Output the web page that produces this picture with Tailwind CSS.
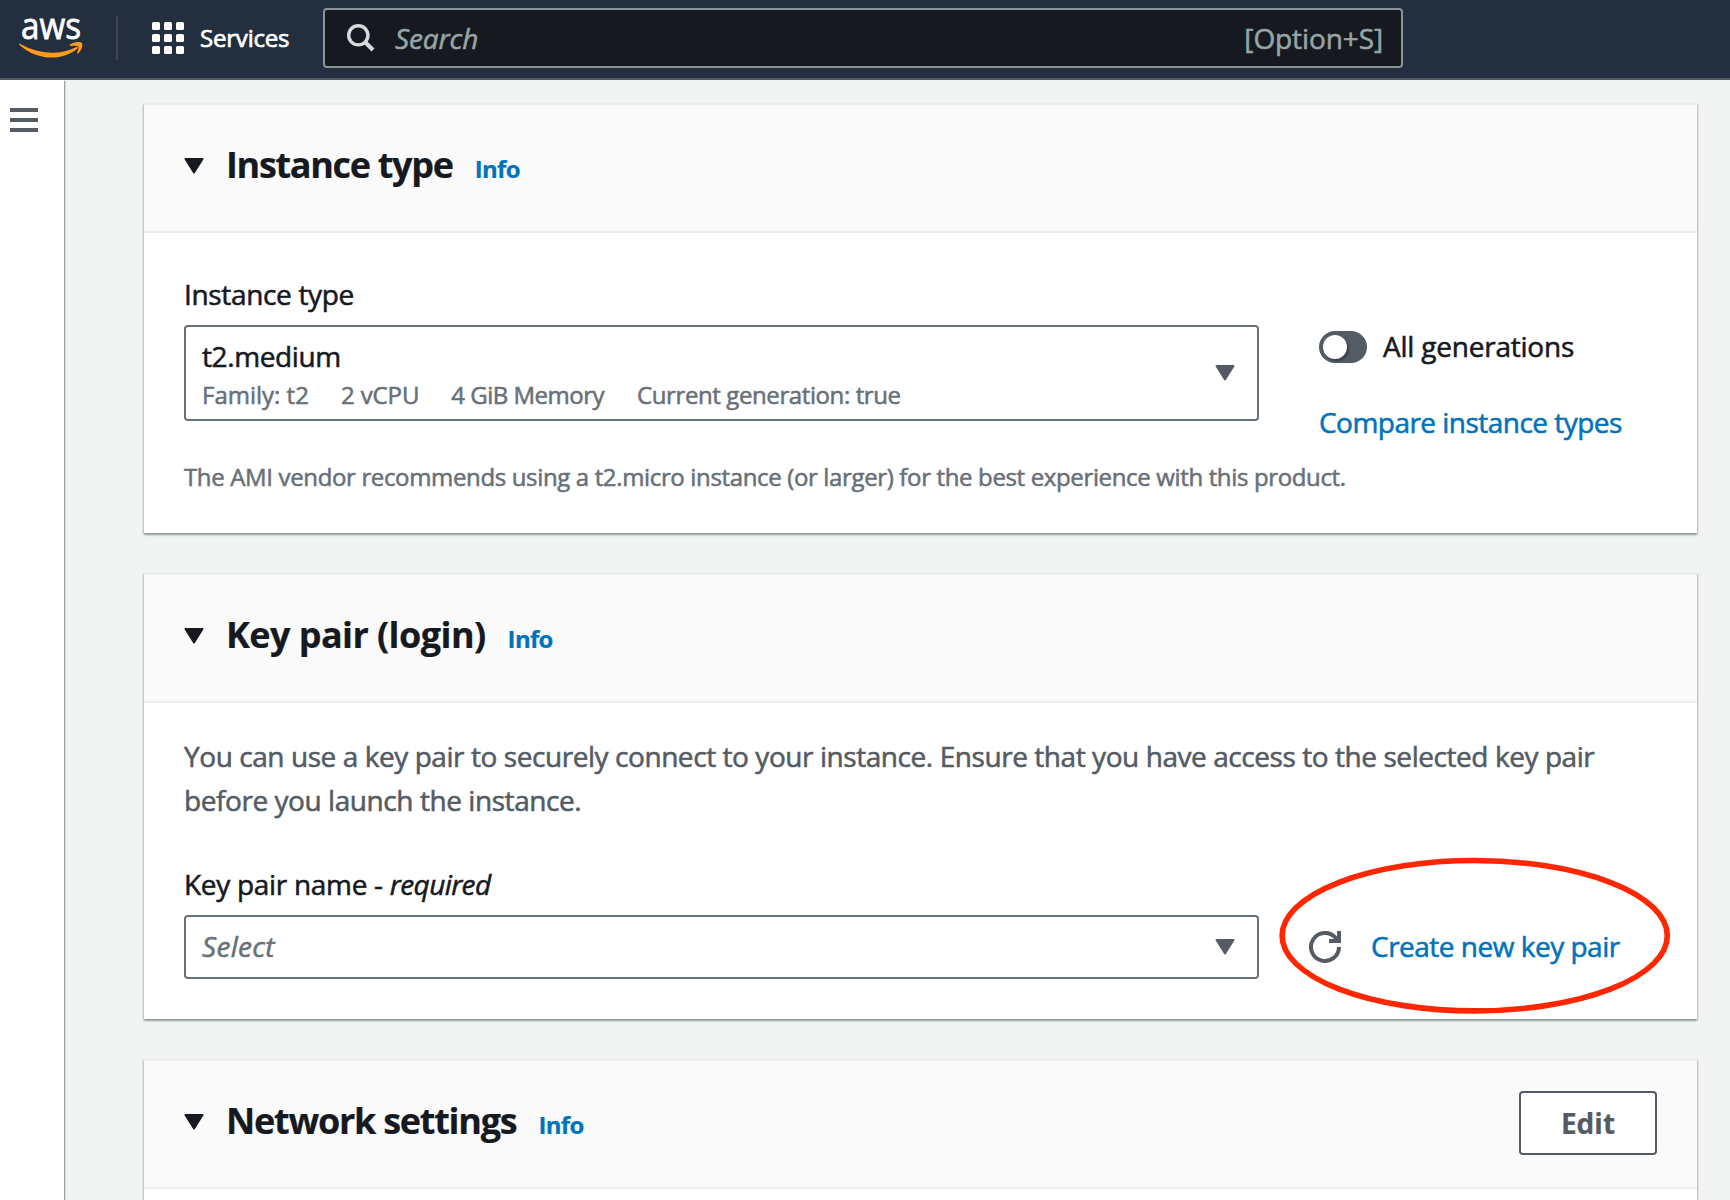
<!DOCTYPE html>
<html lang="en">
<head>
<meta charset="utf-8">
<title>Launch an instance | EC2</title>
<script src="https://cdn.jsdelivr.net/npm/@tailwindcss/browser@4"></script>
</head>
<body class="h-screen overflow-hidden bg-[#f2f3f3] font-['Open_Sans','Noto_Sans',sans-serif] text-[28px] leading-[44px] text-[#16191f] [-webkit-text-stroke:0.55px] whitespace-nowrap">
<svg class="hidden">
  <symbol id="caret" viewBox="0 0 20 16"><path d="M1.5 1h17L10 14.500z" fill="currentColor" stroke="currentColor" stroke-width="2" stroke-linejoin="round"/></symbol>
</svg>

<header class="flex h-20 items-center border-b-2 border-[#545b64] bg-[#232f3e] pb-[2px] pl-[19px] text-white">
  <svg class="h-[76px] w-[65px]" viewBox="0 -16 65 76" fill="none">
    <text x="2" y="23" font-size="37" fill="#fff" stroke="#fff" stroke-width=".8" textLength="60" lengthAdjust="spacingAndGlyphs">aws</text>
    <path d="M.6 27.600C18 37.800 40 40.300 57.500 31c1.200-.5 1.800.5.900 1.400C43 45.800 17.500 44.300.6 28.900c-.7-.8-.5-1.600 0-1.300z" fill="#ff9a1a"/>
    <path d="M51 28.600c3.500-2.800 10-3.300 11.800-1.500 1.500 1.800-.2 7.400-3.400 10.200-.9.700-1.700.2-1.300-.6 1-2.400 2-5 1.200-6.200-.9-1.100-4.700-.8-7.500-.6-1 .1-1.600-.7-.8-1.300z" fill="#ff9a1a"/>
  </svg>
  <div class="ml-[32px] h-11 w-[2px] bg-[#414750]"></div>
  <div class="ml-[34px] grid grid-cols-3 gap-1">
    <i class="size-2 rounded-[1.500px] bg-white"></i><i class="size-2 rounded-[1.500px] bg-white"></i><i class="size-2 rounded-[1.500px] bg-white"></i>
    <i class="size-2 rounded-[1.500px] bg-white"></i><i class="size-2 rounded-[1.500px] bg-white"></i><i class="size-2 rounded-[1.500px] bg-white"></i>
    <i class="size-2 rounded-[1.500px] bg-white"></i><i class="size-2 rounded-[1.500px] bg-white"></i><i class="size-2 rounded-[1.500px] bg-white"></i>
  </div>
  <span class="ml-4 w-[123px] text-2xl tracking-[-0.2px] [-webkit-text-stroke:0.7px]">Services</span>
  <div class="flex h-[60px] w-[1080px] items-center rounded-[4px] border-2 border-[#879596] bg-[#16191f] pr-[18px] pl-[22px] text-[#95a5a6]">
    <svg class="size-7 text-[#d5dbdb]" viewBox="0 0 28 28" fill="none" stroke="currentColor"><circle cx="11.300" cy="11.300" r="9.600" stroke-width="3.400"/><path d="M18 18l8 8" stroke-width="4"/></svg>
    <span class="ml-5 grow italic tracking-[-0.1px]">Search</span>
    <span class="tracking-[-0.1px]">[Option+S]</span>
  </div>
</header>

<div class="flex h-[1120px] overflow-hidden">
  <aside class="w-16 shrink-0 bg-white pt-7 pl-[10px] shadow-[1px_1px_1px_rgba(0,28,36,0.3),1px_0_2px_rgba(0,28,36,0.15)]">
    <div class="flex w-7 flex-col gap-[6px]"><i class="h-1 bg-[#545b64]"></i><i class="h-1 bg-[#545b64]"></i><i class="h-1 bg-[#545b64]"></i></div>
  </aside>

  <main class="ml-20 flex w-[1553px] flex-col gap-10 pt-[23px]">
    <section class="h-[430px] shrink-0 border-t-2 border-[#eaeded] bg-white shadow-[0_2px_2px_rgba(0,28,36,0.3),1px_1px_2px_rgba(0,28,36,0.15),-1px_1px_2px_rgba(0,28,36,0.15)]">
      <div class="flex h-32 items-center border-b-2 border-[#eaeded] bg-[#fafafa] px-10 pb-[2px]">
        <svg class="mb-[3px] h-4 w-5"><use href="#caret"/></svg>
        <div class="ml-[22px] flex items-baseline gap-[22px] pb-1">
          <h2 class="text-4xl leading-[44px] font-bold tracking-[-1.320px] [-webkit-text-stroke:0.2px]">Instance type</h2>
          <a class="text-2xl font-bold tracking-[-0.67px] text-[#0073bb] [-webkit-text-stroke:0.2px]">Info</a>
        </div>
      </div>
      <div class="flex gap-[60px] px-10">
        <div class="w-[1075px] shrink-0 pt-[39px]">
          <div class="tracking-[-0.34px]">Instance type</div>
          <div class="mt-[9px] flex h-24 items-center justify-between rounded-[4px] border-2 border-[#687078] pr-[22px] pl-4">
            <div class="pt-[3px]">
              <div class="leading-10 tracking-[-0.4px]">t2.medium</div>
              <div class="flex gap-8 pt-px text-2xl leading-9 text-[#687078]">
                <span class="tracking-[0]">Family: t2</span><span class="tracking-[-0.1px]">2 vCPU</span><span class="mr-px tracking-[-0.5px]">4 GiB Memory</span><span class="tracking-[-0.4px]">Current generation: true</span>
              </div>
            </div>
            <svg class="h-4 w-5 text-[#545b64]"><use href="#caret"/></svg>
          </div>
          <p class="mt-9 text-2xl leading-10 tracking-[-0.353px] text-[#687078]">The AMI vendor recommends using a t2.micro instance (or larger) for the best experience with this product.</p>
        </div>
        <div class="pt-[93px]">
          <div class="flex items-center gap-4">
            <div class="h-8 w-12 rounded-full bg-[#545b64] p-1"><div class="size-6 rounded-full bg-white shadow-[2px_2px_2px_rgba(0,0,0,0.3)]"></div></div>
            <span class="-mt-[2px] tracking-[-0.22px]">All generations</span>
          </div>
          <a class="mt-[32px] block tracking-[-0.53px] text-[#0073bb]">Compare instance types</a>
        </div>
      </div>
    </section>

    <section class="relative h-[446px] shrink-0 border-t-2 border-[#eaeded] bg-white shadow-[0_2px_2px_rgba(0,28,36,0.3),1px_1px_2px_rgba(0,28,36,0.15),-1px_1px_2px_rgba(0,28,36,0.15)]">
      <div class="flex h-32 items-center border-b-2 border-[#eaeded] bg-[#fafafa] px-10 pb-[2px]">
        <svg class="mb-[3px] h-4 w-5"><use href="#caret"/></svg>
        <div class="ml-[22px] flex items-baseline gap-[22px] pb-1">
          <h2 class="text-4xl leading-[44px] font-bold tracking-[-0.580px] [-webkit-text-stroke:0.2px]">Key pair (login)</h2>
          <a class="text-2xl font-bold tracking-[-0.67px] text-[#0073bb] [-webkit-text-stroke:0.2px]">Info</a>
        </div>
      </div>
      <div class="px-10 pt-[31px]">
        <p class="tracking-[-0.434px] text-[#545b64]">You can use a key pair to securely connect to your instance. Ensure that you have access to the selected key pair<br>before you launch the instance.</p>
        <div class="mt-10 tracking-[-0.3px]">Key pair name - <i class="tracking-[-0.6px]">required</i></div>
        <div class="mt-[9px] flex items-center">
          <div class="flex h-16 w-[1075px] items-center justify-between rounded-[4px] border-2 border-[#687078] pr-[22px] pl-4">
            <i class="-mt-[2px] tracking-[0.3px] text-[#687078]">Select</i>
            <svg class="h-4 w-5 text-[#545b64]"><use href="#caret"/></svg>
          </div>
          <svg class="ml-[50px] size-8" viewBox="0 0 32 32" fill="none" stroke="#545b64" stroke-width="4"><path d="M30 16A14 14 0 1 1 26.500 6.700L29 9.500"/><path d="M30 0v10H20"/></svg>
          <a class="-mt-[2px] ml-[30px] tracking-[-0.5px] text-[#0073bb]">Create new key pair</a>
        </div>
      </div>
      <svg class="absolute top-[282px] left-[1135px] h-[158px] w-[392px]" viewBox="0 0 392 158"><ellipse cx="195.700" cy="78.700" rx="192.600" ry="75.200" fill="none" stroke="#ff2600" stroke-width="5.600"/></svg>
    </section>

    <section class="min-h-0 flex-1 border-t-2 border-[#eaeded] bg-white shadow-[0_2px_2px_rgba(0,28,36,0.3),1px_1px_2px_rgba(0,28,36,0.15),-1px_1px_2px_rgba(0,28,36,0.15)]">
      <div class="flex h-32 items-center border-b-2 border-[#eaeded] bg-[#fafafa] px-10 pb-[2px]">
        <svg class="mb-[3px] h-4 w-5"><use href="#caret"/></svg>
        <div class="ml-[22px] flex items-baseline gap-[22px] pb-1">
          <h2 class="text-4xl leading-[44px] font-bold tracking-[-1.260px] [-webkit-text-stroke:0.2px]">Network settings</h2>
          <a class="text-2xl font-bold tracking-[-0.67px] text-[#0073bb] [-webkit-text-stroke:0.2px]">Info</a>
        </div>
        <button class="ml-auto h-16 w-[138px] rounded-[4px] border-2 border-[#545b64] bg-white font-bold text-[#545b64] [-webkit-text-stroke:0.2px]">Edit</button>
      </div>
    </section>
  </main>
</div>
</body>
</html>
